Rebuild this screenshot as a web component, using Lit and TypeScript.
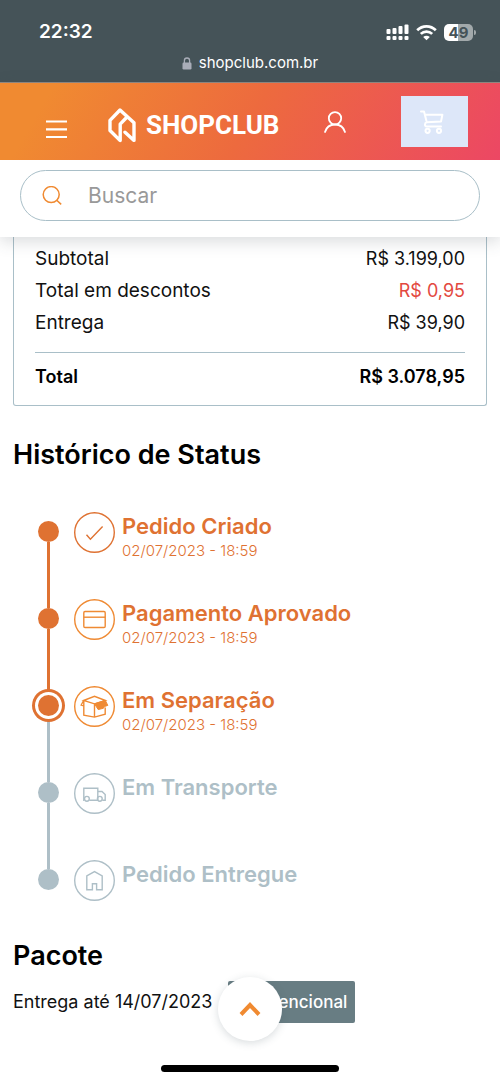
import { LitElement, html, svg, css, nothing } from "lit";
import { customElement, property } from "lit/decorators.js";
import { classMap } from "lit/directives/class-map.js";

type StepState = "done" | "current" | "pending";
type StepIcon = "check" | "card" | "box" | "truck" | "home";

interface Step {
  title: string;
  date?: string;
  icon: StepIcon;
  state: StepState;
}

const STEPS: Step[] = [
  { title: "Pedido Criado", date: "02/07/2023 - 18:59", icon: "check", state: "done" },
  { title: "Pagamento Aprovado", date: "02/07/2023 - 18:59", icon: "card", state: "done" },
  { title: "Em Separação", date: "02/07/2023 - 18:59", icon: "box", state: "current" },
  { title: "Em Transporte", icon: "truck", state: "pending" },
  { title: "Pedido Entregue", icon: "home", state: "pending" },
];

const ICONS = {
  check: svg`<path d="M12.5 22.8 16.4 27.2 28.6 14.4" />`,
  card: svg`<rect x="9.8" y="12.5" width="21.4" height="16" rx="1.2" /><path d="M9.8 18.2H31.2" />`,
  box: svg`<path d="M9.6 14.5 20.5 10.3 31.4 14.5 20.5 17.8ZM9.6 14.5 7.2 19 9.8 19.9M9.8 15V29.2L20.5 31.1 31.2 28.2V21.5M20.5 17.8V31" />
    <path d="M20.5 17.8 31.4 14.5 33.8 19.4 30.5 20.5 29.5 22.2 24.2 23.6Z" fill="currentColor" stroke-width="1" />`,
  truck: svg`<path d="M10.3 27.2H9.8V15.2H23.8V27.2H15.3M23.8 18.5H28L31.2 21.6V27.2H28.3" />
    <circle cx="12.9" cy="25.8" r="2.4" /><circle cx="25.8" cy="25.8" r="2.4" />`,
  home: svg`<path d="M12.8 15.9 20.5 11.6 28.2 15.9V29.8H22.6V23.8H18.4V29.8H12.8Z" />`,
};

@customElement("phone-bar")
class PhoneBar extends LitElement {
  static styles = css`
    :host {
      display: block;
      height: 83px;
      box-sizing: border-box;
      padding-top: 20px;
      background: #455358;
      border-bottom: 1px solid #948a83;
      color: #fff;
      font-family: Inter, "Liberation Sans", sans-serif;
    }
    .top {
      display: flex;
      align-items: center;
      justify-content: space-between;
      height: 24px;
      padding: 0 24px 0 39px;
    }
    .time {
      font-size: 19px;
      line-height: 24px;
      font-weight: 600;
    }
    .status {
      display: flex;
      align-items: center;
      gap: 7px;
    }
    .battery {
      display: flex;
      align-items: center;
      gap: 1px;
    }
    .cell {
      width: 29px;
      height: 17px;
      border-radius: 5px;
      background: linear-gradient(90deg, #fff 49%, #a2a9ab 49%);
      color: #455358;
      font-size: 15px;
      line-height: 17px;
      font-weight: 700;
      text-align: center;
    }
    .tip {
      width: 2px;
      height: 5px;
      border-radius: 0 2px 2px 0;
      background: #a2a9ab;
    }
    .address {
      display: flex;
      align-items: center;
      justify-content: center;
      gap: 7px;
      margin-top: 9px;
      font-size: 15px;
      line-height: 20px;
    }
    svg {
      display: block;
    }
  `;
  render() {
    return html`
      <div class="top">
        <span class="time">22:32</span>
        <div class="status">
          <svg width="23" height="17" viewBox="0 0 23 17" fill="#fff" aria-hidden="true">
            <rect x="0.5" y="5" width="4" height="5" rx="1" /><rect x="6.5" y="4" width="4" height="6" rx="1" />
            <rect x="12.5" y="2" width="4" height="8" rx="1" /><rect x="18.5" y="0.5" width="4" height="9.5" rx="1" />
            <rect x="0.5" y="12" width="4" height="4" rx="1" /><rect x="6.5" y="12" width="4" height="4" rx="1" />
            <rect x="12.5" y="12" width="4" height="4" rx="1" /><rect x="18.5" y="12" width="4" height="4" rx="1" />
          </svg>
          <svg width="21" height="17" viewBox="0 0 21 17" fill="none" stroke="#fff" stroke-width="2.7" aria-hidden="true">
            <path d="M1.2 6.2C6.4 1 14.6 1 19.8 6.2M4.8 9.9C8 6.8 13 6.8 16.2 9.9" />
            <path d="M10.5 16.3 7.2 12.9C9.1 11.2 11.9 11.2 13.8 12.9Z" fill="#fff" stroke="none" />
          </svg>
          <div class="battery"><span class="cell">49</span><span class="tip"></span></div>
        </div>
      </div>
      <div class="address">
        <svg width="10" height="13" viewBox="0 0 10 13" aria-hidden="true">
          <rect x="0.5" y="5.5" width="9" height="7" rx="1.2" fill="#a9adb8" />
          <path d="M2.4 6V3.6a2.6 2.6 0 0 1 5.2 0V6" fill="none" stroke="#a9adb8" stroke-width="1.3" />
        </svg>
        <span>shopclub.com.br</span>
      </div>
    `;
  }
}

@customElement("shop-header")
class ShopHeader extends LitElement {
  static styles = css`
    :host {
      display: block;
      position: relative;
      z-index: 1;
      background: #fff;
      box-shadow: 0 4px 16px rgba(60, 70, 80, 0.2);
    }
    .bar {
      display: flex;
      align-items: center;
      height: 77px;
      padding: 0 32px 0 46px;
      background: linear-gradient(120deg, #f08a31 10%, #ed6a3e 50%, #ec4764 100%);
      color: #fff;
    }
    button {
      display: block;
      padding: 0;
      border: 0;
      background: none;
      color: inherit;
      cursor: pointer;
    }
    svg {
      display: block;
      flex: none;
      fill: none;
      stroke: currentColor;
    }
    .menu {
      padding-top: 15px;
      margin-right: 41px;
    }
    .logo {
      display: flex;
      align-items: center;
      gap: 10px;
      padding-top: 8px;
      color: inherit;
      text-decoration: none;
      font: 700 26px/35px Roboto, "Liberation Sans", sans-serif;
    }
    .user {
      margin-left: auto;
      margin-right: 55px;
    }
    .cart {
      display: grid;
      place-items: center;
      width: 67px;
      height: 51px;
      padding-right: 6px;
      background: #dde7f9;
    }
    .search {
      display: flex;
      align-items: center;
      gap: 26px;
      height: 51px;
      box-sizing: border-box;
      margin: 0 20px;
      padding: 0 24px 0 21px;
      border: 1px solid #a9bfc8;
      border-radius: 26px;
      color: #f08a31;
    }
    form {
      padding: 10px 0 16px;
    }
    input {
      flex: 1;
      min-width: 0;
      padding: 0;
      border: 0;
      outline: 0;
      background: none;
      color: #111;
      font: 400 21px/28px Inter, "Liberation Sans", sans-serif;
    }
    input::placeholder {
      color: #999;
      opacity: 1;
    }
  `;
  render() {
    return html`
      <div class="bar">
        <button class="menu" aria-label="Menu">
          <svg width="21" height="19" viewBox="0 0 21 19" stroke-width="2.2">
            <path d="M0 1.5H21M0 9.3H21M0 17H21" />
          </svg>
        </button>
        <a class="logo" href="#">
          <svg width="28" height="35" viewBox="0 0 28 35" stroke-width="3.4" stroke-linejoin="round" stroke-linecap="round" aria-hidden="true">
            <path d="M19 9 12.2 16.2V32.6L2 22.5V12.4L12 2 26 14.8V32.4L17 24.2" />
          </svg>
          SHOPCLUB
        </a>
        <button class="user" aria-label="Minha conta">
          <svg width="22" height="22" viewBox="0 0 22 22" stroke-width="1.8" stroke-linecap="round">
            <circle cx="11" cy="7.3" r="6.2" />
            <path d="M1 21C2.4 16.4 6.3 13.5 11 13.5S19.6 16.4 21 21" />
          </svg>
        </button>
        <button class="cart" aria-label="Carrinho">
          <svg width="24" height="24" viewBox="0 0 24 24" stroke-width="2" stroke-linejoin="round" stroke-linecap="round">
            <path d="M1 1.5H4L6.4 10.8M5 4.8H22.4L21 11.6 6.6 12.2C4.4 12.8 4.4 16.2 6.6 16.4H21" />
            <circle cx="7.6" cy="20.8" r="2.1" /><circle cx="19" cy="20.8" r="2.1" />
          </svg>
        </button>
      </div>
      <form>
        <label class="search">
          <svg width="20" height="20" viewBox="0 0 20 20" stroke-width="1.5" aria-hidden="true">
            <circle cx="9.2" cy="8.6" r="8" /><path d="M14.4 14 19.2 18.4" />
          </svg>
          <input type="search" placeholder="Buscar" aria-label="Buscar" />
        </label>
      </form>
    `;
  }
}

@customElement("status-step")
class StatusStep extends LitElement {
  @property({ attribute: false }) step!: Step;
  @property({ type: Boolean }) first = false;
  @property({ type: Boolean }) last = false;

  static styles = css`
    :host {
      display: grid;
      grid-template-columns: 33px 50px 1fr;
      height: 87px;
      --orange: #df7232;
      --muted: #aebfc7;
      color: var(--orange);
    }
    .pending {
      color: var(--muted);
    }
    .track {
      display: flex;
      flex-direction: column;
      align-items: center;
    }
    .line {
      width: 3px;
      flex: 1;
      background: currentColor;
    }
    .lead {
      flex: 0 0 10px;
    }
    .hidden {
      visibility: hidden;
    }
    .after {
      color: var(--muted);
    }
    .dot {
      position: relative;
      width: 21px;
      height: 21px;
      border-radius: 50%;
      background: currentColor;
    }
    .ring {
      box-shadow: 0 0 0 3px #fff, 0 0 0 6px var(--orange);
    }
    .icon {
      display: block;
      margin: 1px 0 0 9px;
      fill: none;
      stroke: currentColor;
      stroke-width: 1.4;
      overflow: visible;
    }
    .bright {
      color: #ef8a33;
    }
    .text {
      padding: 1px 0 0 7px;
    }
    .title {
      margin: 0;
      font-size: 22px;
      line-height: 28px;
      font-weight: 600;
    }
    .date {
      margin: 0;
      font-size: 15px;
      line-height: 22px;
      font-weight: 300;
    }
  `;
  render() {
    const { title, date, icon, state } = this.step;
    const pending = state === "pending";
    return html`
      <div class=${classMap({ track: true, pending })}>
        <span class=${classMap({ line: true, lead: true, hidden: this.first })}></span>
        <span class=${classMap({ dot: true, ring: state === "current" })}></span>
        <span class=${classMap({ line: true, after: state === "current", hidden: this.last })}></span>
      </div>
      <svg class=${classMap({ icon: true, pending, bright: icon === "card" || icon === "box" })} width="41" height="41" viewBox="0 0 41 41" aria-hidden="true">
        <circle cx="20.5" cy="20.5" r="19.8" />${ICONS[icon]}
      </svg>
      <div class=${classMap({ text: true, pending })}>
        <h3 class="title">${title}</h3>
        ${date ? html`<p class="date">${date}</p>` : nothing}
      </div>
    `;
  }
}

@customElement("app-root")
class AppRoot extends LitElement {
  static styles = css`
    :host {
      display: block;
      position: relative;
      min-height: 100vh;
      background: #fff;
      color: #111;
      font: 400 18px/32px Inter, "Liberation Sans", sans-serif;
    }
    main {
      padding: 0 13px;
    }
    .summary {
      padding: 6px 21px 12px;
      border: 1px solid #a9bfc8;
      border-top: 0;
      border-radius: 0 0 3px 3px;
    }
    dl,
    dd,
    ol {
      margin: 0;
      padding: 0;
    }
    .row {
      display: flex;
      justify-content: space-between;
    }
    dt {
      font-size: 19px;
    }
    .discount {
      color: #e3493f;
    }
    .total {
      margin-top: 13px;
      padding-top: 8px;
      border-top: 1px solid #a9bfc8;
      color: #000;
      font-weight: 600;
    }
    .total dt {
      font-size: 18px;
    }
    h2 {
      margin: 33px 0 0;
      color: #000;
      font-size: 27px;
      line-height: 32px;
      font-weight: 600;
    }
    ol {
      margin-top: 40px;
      padding-left: 19px;
      list-style: none;
    }
    .package {
      margin-top: -6px;
    }
    .delivery {
      display: flex;
      align-items: center;
      gap: 16px;
      margin-top: 9px;
      white-space: nowrap;
    }
    .badge {
      padding: 0 8px;
      border-radius: 2px;
      background: #687d83;
      color: #fff;
      font-size: 17px;
      line-height: 42px;
      font-weight: 500;
    }
    .up {
      position: absolute;
      left: calc(50% - 32px);
      bottom: 41px;
      display: grid;
      place-items: center;
      width: 64px;
      height: 64px;
      padding: 0;
      border: 0;
      border-radius: 50%;
      background: #fff;
      box-shadow: 0 2px 8px rgba(60, 80, 90, 0.2);
      cursor: pointer;
    }
    .indicator {
      position: absolute;
      left: calc(50% - 89px);
      bottom: 10px;
      width: 178px;
      height: 7px;
      border-radius: 4px;
      background: #000;
    }
  `;
  render() {
    return html`
      <phone-bar></phone-bar>
      <shop-header></shop-header>
      <main>
        <dl class="summary">
          <div class="row"><dt>Subtotal</dt><dd>R$ 3.199,00</dd></div>
          <div class="row"><dt>Total em descontos</dt><dd class="discount">R$ 0,95</dd></div>
          <div class="row"><dt>Entrega</dt><dd>R$ 39,90</dd></div>
          <div class="row total"><dt>Total</dt><dd>R$ 3.078,95</dd></div>
        </dl>
        <h2>Histórico de Status</h2>
        <ol>
          ${STEPS.map(
            (step, i) => html`<li>
              <status-step .step=${step} ?first=${i === 0} ?last=${i === STEPS.length - 1}></status-step>
            </li>`
          )}
        </ol>
        <h2 class="package">Pacote</h2>
        <div class="delivery"><span>Entrega até 14/07/2023</span><span class="badge">Convencional</span></div>
      </main>
      <button class="up" aria-label="Voltar ao topo">
        <svg width="22" height="16" viewBox="0 0 22 16" fill="none" stroke="#f08a31" stroke-width="4">
          <path d="M2 13.5 11 4 20 13.5" />
        </svg>
      </button>
      <div class="indicator"></div>
    `;
  }
}
